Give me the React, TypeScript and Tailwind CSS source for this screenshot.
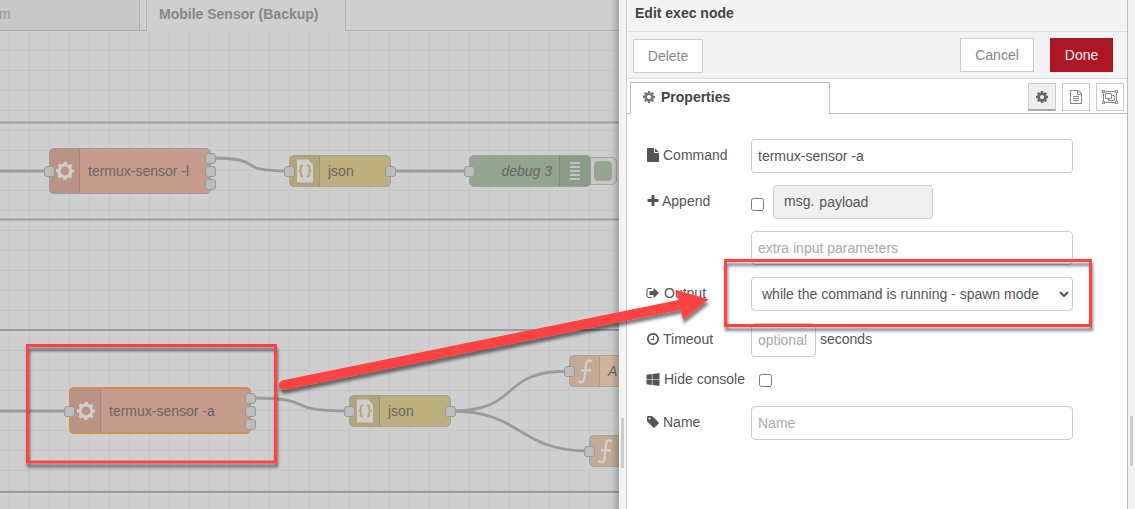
import type { ReactNode } from "react";

const icons = {
  cog: "M1152 896q0-106-75-181t-181-75-181 75-75 181 75 181 181 75 181-75 75-181zm512-109v222q0 12-8 23t-20 13l-185 28q-19 54-39 91 35 50 107 138 10 12 10 25t-9 23q-27 37-99 108t-94 71q-12 0-26-9l-138-108q-44 23-91 38-16 136-29 186-7 28-36 28h-222q-14 0-24.5-8.5t-11.5-21.5l-28-184q-49-16-90-37l-141 107q-10 9-25 9-14 0-25-11-126-114-165-168-7-10-7-23 0-12 8-23 15-21 51-66.5t54-70.5q-27-50-41-99l-183-27q-13-2-21-12.5t-8-23.5v-222q0-12 8-23t19-13l186-28q14-46 39-92-40-57-107-138-10-12-10-24 0-10 9-23 26-36 98.5-107.5t94.5-71.5q13 0 26 10l138 107q44-23 91-38 16-136 29-186 7-28 36-28h222q14 0 24.5 8.5t11.5 21.5l28 184q49 16 90 37l142-107q9-9 24-9 13 0 25 10 129 119 165 170 7 8 7 22 0 12-8 23-15 21-51 66.5t-54 70.5q26 50 41 98l183 28q13 2 21 12.5t8 23.5z",
  file: "M1152 512v-472q22 14 36 28l408 408q14 14 28 36h-472zm-128 32q0 40 28 68t68 28h544v1056q0 40-28 68t-68 28h-1344q-40 0-68-28t-28-68v-1600q0-40 28-68t68-28h800v544z",
  plus: "M1600 736v192q0 40-28 68t-68 28h-416v416q0 40-28 68t-68 28h-192q-40 0-68-28t-28-68v-416h-416q-40 0-68-28t-28-68v-192q0-40 28-68t68-28h416v-416q0-40 28-68t68-28h192q40 0 68 28t28 68v416h416q40 0 68 28t28 68z",
  signOut:
    "M704 1440q0 4 1 20t.5 26.5-3 23.5-10 19.5-20.5 6.5h-320q-119 0-203.5-84.5t-84.5-203.5v-704q0-119 84.5-203.5t203.5-84.5h320q13 0 22.5 9.5t9.5 22.5q0 4 1 20t.5 26.5-3 23.5-10 19.5-20.5 6.5h-320q-66 0-113 47t-47 113v704q0 66 47 113t113 47h312l11.5 1 11.5 3 8 5.5 7 9 2 13.5zm928-544q0 26-19 45l-544 544q-19 19-45 19t-45-19-19-45v-288h-448q-26 0-45-19t-19-45v-384q0-26 19-45t45-19h448v-288q0-26 19-45t45-19 45 19l544 544q19 19 19 45z",
  clock: "M1024 544v448q0 14-9 23t-23 9h-320q-14 0-23-9t-9-23v-64q0-14 9-23t23-9h224v-352q0-14 9-23t23-9h64q14 0 23 9t9 23zm416 352q0-148-73-273t-198-198-273-73-273 73-198 198-73 273 73 273 198 198 273 73 273-73 198-198 73-273zm224 0q0 209-103 385.5t-279.5 279.5-385.5 103-385.5-103-279.5-279.5-103-385.5 103-385.5 279.5-279.5 385.5-103 385.5 103 279.5 279.5 103 385.5z",
  windows: "M746 1006v651l-682-94v-557h682zm0-743v659h-682v-565zm982 743v786l-907-125v-661h907zm0-878v794h-907v-669z",
  tag: "M576 448q0-53-37.5-90.5t-90.5-37.5-90.5 37.5-37.5 90.5 37.5 90.5 90.5 37.5 90.5-37.5 37.5-90.5zm1067 576q0 53-37 90l-491 492q-39 37-91 37-53 0-90-37l-715-716q-38-37-64.5-101t-26.5-117v-416q0-52 38-90t90-38h416q53 0 117 26.5t102 64.5l715 714q37 39 37 91z",
  fileText:
    "M1596 380q28 28 48 76t20 88v1152q0 40-28 68t-68 28h-1344q-40 0-68-28t-28-68v-1600q0-40 28-68t68-28h896q40 0 88 20t76 48zm-444-244v376h376q-10-29-22-41l-313-313q-12-12-41-22zm384 1528v-1024h-416q-40 0-68-28t-28-68v-416h-768v1536h1280zm-1024-864q0-14 9-23t23-9h704q14 0 23 9t9 23v64q0 14-9 23t-23 9h-704q-14 0-23-9t-9-23v-64zm736 224q14 0 23 9t9 23v64q0 14-9 23t-23 9h-704q-14 0-23-9t-9-23v-64q0-14 9-23t23-9h704zm0 256q14 0 23 9t9 23v64q0 14-9 23t-23 9h-704q-14 0-23-9t-9-23v-64q0-14 9-23t23-9h704z",
};

function Icon({ name, className = "" }: { name: keyof typeof icons; className?: string }) {
  return (
    <svg viewBox="0 0 1792 1792" className={`size-3.5 shrink-0 fill-current ${className}`}>
      <path d={icons[name]} />
    </svg>
  );
}

function ObjectGroupIcon() {
  return (
    <svg viewBox="0 0 16 14" className="h-3.5 w-4 shrink-0" fill="none" stroke="currentColor">
      <path d="M3 1.5H13M3 12.5H13M1.5 3V11M14.5 3V11" />
      <path d="M.5.5h2v2h-2zM13.5.5h2v2h-2zM.5 11.5h2v2h-2zM13.5 11.5h2v2h-2z" />
      <path d="M3.5 3.5h6v5h-6zM9.5 5.5h3v5h-6v-2" />
    </svg>
  );
}

function Port({ className }: { className: string }) {
  return <span className={`absolute size-[11px] rounded-[3px] border border-[#999] bg-[#bcbcbc] ${className}`} />;
}

function GearGlyph() {
  return (
    <svg viewBox="0 0 20 20" className="size-5" fill="none" stroke="#cfcfcf">
      <circle cx="10" cy="10" r="5.9" strokeWidth="3" />
      <circle cx="10" cy="10" r="7.8" strokeWidth="2.6" strokeDasharray="3.1 3.026" strokeDashoffset="1.55" />
    </svg>
  );
}

function BracesGlyph() {
  return (
    <svg viewBox="0 0 16 24" className="h-6 w-4" fill="none">
      <path d="M0 .5H11L16 5.5V23.5H0Z" fill="#cfcfcf" />
      <path
        d="M6 6.5C4.2 6.3 3.7 7 3.7 8.5V10C3.7 11.2 3 11.8 1.8 11.9C3 12 3.7 12.7 3.7 13.8V15.5C3.7 17 4.2 17.6 6 17.4M10 6.5C11.8 6.3 12.3 7 12.3 8.5V10C12.3 11.2 13 11.8 14.2 11.9C13 12 12.3 12.7 12.3 13.8V15.5C12.3 17 11.8 17.6 10 17.4"
        stroke="#b5a673"
        strokeWidth="1.9"
      />
    </svg>
  );
}

function FunctionGlyph() {
  return (
    <svg viewBox="0 0 20 26" className="h-[26px] w-5" fill="none" stroke="#d1cfcd" strokeWidth="2.4">
      <path d="M17 3.9C14.5 1.6 11.4 2.3 11 6L9.6 20C9.3 24 6.5 25.2 3.4 23M6 12.3H16" />
    </svg>
  );
}

function FlowNode({
  className,
  icon,
  label,
  children,
}: {
  className: string;
  icon: ReactNode;
  label?: ReactNode;
  children?: ReactNode;
}) {
  return (
    <div className={`absolute flex rounded-[5px] text-[#666] ${className}`}>
      <span className="flex w-[30px] shrink-0 items-center justify-center border-r border-black/10 bg-black/5 pl-px">
        {icon}
      </span>
      <span className="flex items-center pl-2 whitespace-nowrap">{label}</span>
      {children}
    </div>
  );
}

function Workspace() {
  const columns = Array.from({ length: 31 }, (_, i) => 9.5 + i * 20);
  const rows = Array.from({ length: 23 }, (_, i) => 50.5 + i * 20);
  return (
    <section className="relative flex w-[619px] shrink-0 flex-col overflow-hidden bg-[#cfcfcf]">
      <div className="flex h-[31px] shrink-0">
        <div className="w-[140px] border-r border-b border-[#b0b0b0] bg-[#c8c8c8] pt-1 text-[#969696]">
          <span className="-ml-[1px]">m</span>
        </div>
        <div className="w-1.5 border-b border-[#b0b0b0]" />
        <div className="w-[200px] border-x border-[#b0b0b0] pt-1 pl-3 font-bold whitespace-nowrap text-[#868686]">
          Mobile Sensor (Backup)
        </div>
        <div className="flex-1 border-b border-[#b0b0b0]" />
      </div>
      <svg viewBox="0 0 619 509" className="absolute inset-0 h-[509px] w-[619px]" fill="none">
        <g stroke="#c5c5c5">
          {columns.map((x) => (
            <path key={x} d={`M${x} 31V509`} />
          ))}
          {rows.map((y) => (
            <path key={y} d={`M0 ${y}H619`} />
          ))}
        </g>
        <path d="M0 122.5H619M0 219.5H619M0 330H619M0 492H619" stroke="#9b9b9b" strokeWidth="2" />
        <g stroke="#9b9b9b" strokeWidth="2.8">
          <path d="M0 171H50M390 171H470M0 411H70" />
          <path d="M210 158C271 158 229 171 290 171" />
          <path d="M250 398C325 398 275 411 350 411" />
          <path d="M450 411C525 411 495 371 570 371" />
          <path d="M450 411C525 411 515 451 590 451" />
        </g>
      </svg>

      <FlowNode
        className="top-[148px] left-[49px] h-[46px] w-[162px] border border-[#a09a98] bg-[#c59b8c]"
        icon={<GearGlyph />}
        label="termux-sensor -l"
      >
        <Port className="top-[16.5px] -left-[6px]" />
        <Port className="top-[3.5px] -right-[5.5px]" />
        <Port className="top-[16.5px] -right-[5.5px]" />
        <Port className="top-[29.5px] -right-[5.5px]" />
      </FlowNode>
      <FlowNode
        className="top-[155px] left-[289px] h-8 w-[102px] border-[1.5px] border-[#a5a194] bg-[#bdae7d]"
        icon={<BracesGlyph />}
        label="json"
      >
        <Port className="top-[9.5px] -left-[6px]" />
        <Port className="top-[9.5px] -right-[5.5px]" />
      </FlowNode>

      <div className="absolute top-[157px] left-[584px] h-[28px] w-[33px] rounded-[5px] border border-[#a5a5a5] bg-[#c8c8c8]" />
      <div className="absolute top-[161px] left-[594px] h-5 w-[18px] rounded-[4px] border border-[#a0a0a0] bg-[#93a58f]" />
      <div className="absolute top-[155px] left-[469px] flex h-8 w-[122px] items-center justify-end rounded-[5px] border-[1.5px] border-[#9aa198] bg-[#93a58f] text-[#666]">
        <span className="pr-[7px] italic">debug 3</span>
        <span className="flex h-full w-[31px] items-center justify-center border-l border-black/10 bg-black/5 pr-px">
          <svg viewBox="0 0 10 18" className="h-[18px] w-2.5" fill="none" stroke="#cfcfcf" strokeWidth="1.6">
            <path d="M0 1H10M0 5H10M0 9H10M0 13H10M0 17H10" />
          </svg>
        </span>
        <Port className="top-[9.5px] -left-[6px]" />
      </div>

      <FlowNode
        className="top-[387px] left-[69px] h-[47px] w-[182px] border-2 border-[#cf8f59] bg-[#c59b8c]"
        icon={<GearGlyph />}
        label="termux-sensor -a"
      >
        <Port className="top-[16.5px] -left-[7px]" />
        <Port className="top-[3.5px] -right-[6.5px]" />
        <Port className="top-[16.5px] -right-[6.5px]" />
        <Port className="top-[29.5px] -right-[6.5px]" />
      </FlowNode>
      <FlowNode
        className="top-[395px] left-[349px] h-8 w-[102px] border-[1.5px] border-[#a5a194] bg-[#bdae7d]"
        icon={<BracesGlyph />}
        label="json"
      >
        <Port className="top-[9.5px] -left-[6px]" />
        <Port className="top-[9.5px] -right-[5.5px]" />
      </FlowNode>
      <FlowNode
        className="top-[355px] left-[569px] h-8 w-[160px] border-[1.5px] border-[#aaa29a] bg-[#cfb49c]"
        icon={<FunctionGlyph />}
        label={<i>A</i>}
      >
        <Port className="top-[9.5px] -left-[6px]" />
      </FlowNode>
      <FlowNode
        className="top-[435px] left-[589px] h-8 w-[160px] border-[1.5px] border-[#aaa29a] bg-[#cfb49c]"
        icon={<FunctionGlyph />}
      >
        <Port className="top-[9.5px] -left-[6px]" />
      </FlowNode>
      <div className="absolute inset-y-0 right-0 w-2 bg-linear-to-r from-black/0 to-black/20" />
    </section>
  );
}

function Row({
  icon,
  label,
  gap = "gap-[3px]",
  className = "h-[34px]",
  children,
}: {
  icon?: keyof typeof icons;
  label?: string;
  gap?: string;
  className?: string;
  children: ReactNode;
}) {
  return (
    <div className={`flex items-center ${className}`}>
      <div className={`flex w-[105px] shrink-0 items-center pb-[2px] whitespace-nowrap ${gap}`}>
        {icon && <Icon name={icon} />}
        {label}
      </div>
      {children}
    </div>
  );
}

const field = "h-[34px] rounded-[4px] border border-[#ccc] bg-white px-1.5 text-[#555] outline-none placeholder:text-[#aaa]";

function EditTray() {
  return (
    <main className="flex w-[502px] shrink-0 flex-col border-r border-l border-r-[#bbb] border-l-[#ccc] bg-white text-[#555]">
      <header className="flex h-8 shrink-0 items-center border-b border-[#ddd] bg-[#f3f3f3] pb-[5px] pl-2 font-bold text-[#444]">
        Edit exec node
      </header>
      <div className="flex h-[47px] shrink-0 items-start border-b border-[#ddd] bg-[#f3f3f3] pt-1.5 pr-3.5 pl-1.5 text-[#888]">
        <button className="mt-px h-[34px] w-[70px] border border-[#ccc] bg-white">Delete</button>
        <button className="ml-auto h-[34px] w-[74px] border border-[#ccc] bg-white">Cancel</button>
        <button className="ml-4 h-[34px] w-[63px] bg-[#ad1625] text-[#eee]">Done</button>
      </div>
      <div className="flex h-[35px] shrink-0">
        <div className="w-[3px] border-b border-[#bbb]" />
        <div className="mt-[3px] flex w-[200px] items-center gap-[5px] border-x border-t border-[#bbb] pb-[3px] pl-[11px] font-bold text-[#444]">
          <Icon name="cog" className="text-[#777]" />
          Properties
        </div>
        <div className="flex flex-1 justify-end gap-1.5 border-b border-[#bbb] pt-1 pr-[3px] text-[#888]">
          <button className="flex size-7 items-center justify-center border border-b-2 border-[#ccc] border-b-[#aaa] bg-[#efefef] text-[#666]">
            <Icon name="cog" />
          </button>
          <button className="flex size-7 items-center justify-center border border-[#ccc]">
            <Icon name="fileText" />
          </button>
          <button className="flex size-7 items-center justify-center border border-[#ccc]">
            <ObjectGroupIcon />
          </button>
        </div>
      </div>
      <form className="flex flex-col gap-3 pt-[25px] pl-[19px]">
        <Row icon="file" label="Command">
          <input className={`${field} w-[322px]`} defaultValue="termux-sensor -a" />
        </Row>
        <Row icon="plus" label="Append" gap="gap-[2px]">
          <input type="checkbox" className="mt-1 size-[13px]" />
          <div className="ml-[9px] flex h-[34px] w-[160px] items-center rounded-[4px] border border-[#ccc] bg-[#efefef] pl-2.5">
            <span className="pb-[2px]">msg.</span>
            <span className="pl-[5px]">payload</span>
          </div>
        </Row>
        <Row>
          <input className={`${field} w-[322px]`} placeholder="extra input parameters" />
        </Row>
        <Row icon="signOut" label="Output" gap="gap-1">
          <select className={`${field} w-[322px]`}>
            <option>while the command is running - spawn mode</option>
          </select>
        </Row>
        <Row icon="clock" label="Timeout">
          <input className={`${field} w-[65px]`} placeholder="optional" />
          <span className="pb-[2px] pl-1">seconds</span>
        </Row>
        <Row icon="windows" label="Hide console" className="mb-[3px] h-[22px]" gap="gap-1">
          <input type="checkbox" className="ml-2 size-[13px]" />
        </Row>
        <Row icon="tag" label="Name">
          <input className={`${field} w-[322px]`} placeholder="Name" />
        </Row>
      </form>
    </main>
  );
}

function Annotations() {
  return (
    <svg viewBox="0 0 1135 509" className="pointer-events-none absolute inset-0 h-[509px] w-[1135px]" fill="none">
      <defs>
        <filter id="shadow" filterUnits="userSpaceOnUse" x="0" y="0" width="1135" height="509">
          <feDropShadow dx="1" dy="4" stdDeviation="1.8" floodColor="#000" floodOpacity=".5" />
        </filter>
      </defs>
      <g filter="url(#shadow)">
        <rect x="27.5" y="345.5" width="248" height="116.5" stroke="#ff4343" strokeWidth="3" />
        <rect x="725.5" y="260.5" width="365" height="65" stroke="#ff4343" strokeWidth="3" />
        <path d="M283.8 385L682 304.4" stroke="#ff4343" strokeWidth="9.8" strokeLinecap="round" />
        <path d="M676.5 290.3L708.8 299.3L683 319.7Z" fill="#ff4343" />
      </g>
    </svg>
  );
}

export default function App() {
  return (
    <div className="relative flex h-[509px] w-[1135px] overflow-hidden bg-[#f3f3f3] font-['Liberation_Sans',Arial,sans-serif] text-sm">
      <Workspace />
      <div className="w-[7px] shrink-0 bg-[#f3f3f3] pt-[418px] pl-0.5">
        <div className="h-[50px] w-[3px] bg-[#ccc]" />
      </div>
      <EditTray />
      <div className="flex-1 bg-[#f3f3f3] pt-[416px] pl-0.5">
        <div className="h-[50px] w-[3px] bg-[#ccc]" />
      </div>
      <Annotations />
    </div>
  );
}
